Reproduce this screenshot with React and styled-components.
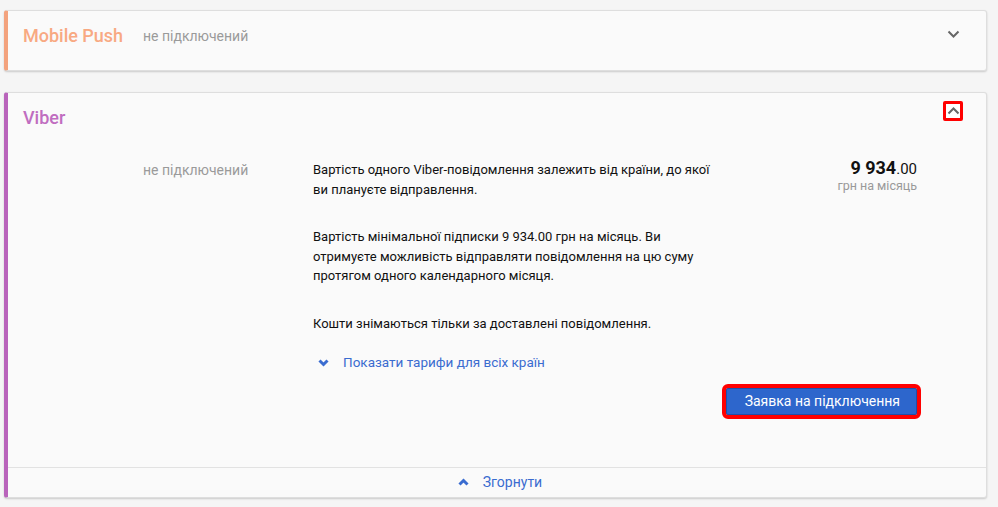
import React from "react";
import styled, { createGlobalStyle } from "styled-components";

const Global = createGlobalStyle`
  html, body { margin: 0; padding: 0; background: #f5f5f5; }
  body { font-family: Roboto, "Noto Sans", Arial, sans-serif; color: #222; }
`;

const Page = styled.div`
  padding: 10px 11px 10px 4px;
  display: flex;
  flex-direction: column;
  gap: 21px;
`;

const Card = styled.section`
  background: #fafafa;
  border: 1px solid #dedede;
  border-left: 4px solid ${(p) => p.$accent};
  border-radius: 3px;
  box-shadow: 0 1px 2px rgba(0, 0, 0, 0.18);
  display: flex;
  flex-direction: column;
`;

const Header = styled.div`
  display: flex;
  align-items: flex-start;
  height: ${(p) => p.$h}px;
  padding: 13px 23px 0 15px;
  box-sizing: border-box;
`;

const Title = styled.h2`
  margin: 0;
  width: 120px;
  flex: none;
  font-size: 18px;
  line-height: 24px;
  font-weight: 500;
  color: ${(p) => p.$color};
`;

const Status = styled.span`
  font-size: 14px;
  line-height: 24px;
  color: #9a9a9a;
`;

const Spacer = styled.div`
  flex: 1;
`;

const Toggle = styled.button`
  border: none;
  background: transparent;
  padding: 0;
  width: ${(p) => (p.$boxed ? 20 : 16)}px;
  height: ${(p) => (p.$boxed ? 20 : 16)}px;
  margin-top: ${(p) => (p.$boxed ? -5 : 2)}px;
  margin-right: ${(p) => (p.$boxed ? 0 : 2)}px;
  display: flex;
  align-items: center;
  justify-content: center;
  box-sizing: border-box;
  ${(p) => (p.$boxed ? "border: 3px solid #ff0000; border-radius: 2px; background: #fff;" : "")}
`;

const Body = styled.div`
  display: grid;
  grid-template-columns: 120px 170px 410px 1fr;
  padding: 17px 69px 52px 15px;
  font-size: 13px;
  line-height: 19.5px;
`;

const BodyStatus = styled.div`
  grid-column: 2;
  font-size: 14px;
  line-height: 20px;
  color: #9a9a9a;
`;

const Description = styled.div`
  grid-column: 3;
  color: #111;
`;

const Para = styled.p`
  margin: 0 0 28px 0;
`;

const Price = styled.div`
  grid-column: 4;
  text-align: right;
  margin-top: -1px;
`;

const Amount = styled.div`
  font-size: 18px;
  line-height: 18px;
  color: #111;
  b { font-weight: 700; }
  span { font-size: 15px; font-weight: 400; }
`;

const Period = styled.div`
  font-size: 12.5px;
  line-height: 15px;
  color: #999;
`;

const LinkRow = styled.a`
  display: flex;
  align-items: center;
  gap: 14px;
  margin-top: -8px;
  padding-left: 5px;
  color: #3a6cd0;
  font-size: 13.5px;
  text-decoration: none;
  cursor: pointer;
`;

const Actions = styled.div`
  grid-column: 3 / 5;
  display: flex;
  justify-content: flex-end;
  margin-top: 15px;
`;

const Button = styled.button`
  background: #2d66cc;
  color: #fff;
  font-family: Roboto, Arial, sans-serif;
  font-size: 14px;
  height: 27px;
  padding: 0 17px 0 19px;
  border: none;
  border-radius: 2px;
  outline: 4px solid #ff0000;
  outline-offset: 0;
  box-shadow: inset 0 0 0 1px #1f4fa8;
`;

const Footer = styled.div`
  border-top: 1px solid #e2e2e2;
  height: 29px;
  display: flex;
  align-items: center;
  justify-content: center;
  gap: 14px;
  padding-left: 6px;
  color: #3a6cd0;
  font-size: 14px;
`;

const ChevronThin = ({ up }) => (
  <svg width="13" height="8" viewBox="0 0 13 8">
    <polyline
      points={up ? "1.5,6.5 6.5,1.5 11.5,6.5" : "1.5,1.5 6.5,6.5 11.5,1.5"}
      fill="none"
      stroke="#666"
      strokeWidth="2"
    />
  </svg>
);

const ChevronBold = ({ up }) => (
  <svg width="11" height="8" viewBox="0 0 11 8">
    <polyline
      points={up ? "1.5,6.5 5.5,2.5 9.5,6.5" : "1.5,1.5 5.5,5.5 9.5,1.5"}
      fill="none"
      stroke="#3a6cd0"
      strokeWidth="3"
    />
  </svg>
);

export default function App() {
  return (
    <>
      <Global />
      <Page>
        <Card $accent="#f3a27d">
          <Header $h={59}>
            <Title $color="#f8a982">Mobile Push</Title>
            <Status>не підключений</Status>
            <Spacer />
            <Toggle aria-label="Розгорнути">
              <ChevronThin />
            </Toggle>
          </Header>
        </Card>

        <Card $accent="#b964bb">
          <Header $h={50}>
            <Title $color="#c06dc0">Viber</Title>
            <Spacer />
            <Toggle $boxed aria-label="Згорнути">
              <ChevronThin up />
            </Toggle>
          </Header>
          <Body>
            <BodyStatus>не підключений</BodyStatus>
            <Description>
              <Para>
                Вартість одного Viber-повідомлення залежить від країни, до якої ви
                плануєте відправлення.
              </Para>
              <Para>
                Вартість мінімальної підписки 9 934.00 грн на місяць. Ви отримуєте
                можливість відправляти повідомлення на цю суму протягом одного
                календарного місяця.
              </Para>
              <Para>Кошти знімаються тільки за доставлені повідомлення.</Para>
              <LinkRow>
                <ChevronBold />
                Показати тарифи для всіх країн
              </LinkRow>
            </Description>
            <Price>
              <Amount>
                <b>9 934</b>
                <span>.00</span>
              </Amount>
              <Period>грн на місяць</Period>
            </Price>
            <Actions>
              <Button>Заявка на підключення</Button>
            </Actions>
          </Body>
          <Footer>
            <ChevronBold up />
            Згорнути
          </Footer>
        </Card>
      </Page>
    </>
  );
}
